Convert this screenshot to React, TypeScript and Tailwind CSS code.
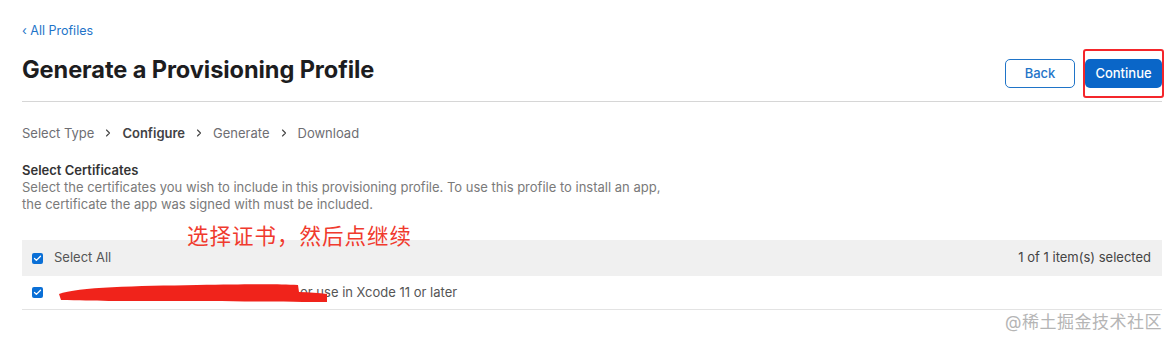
import { ChevronRight, Check } from "lucide-react";

const font = { fontFamily: 'Inter, "Noto Sans CJK SC", sans-serif' };

function Box() {
  return (
    <span className="w-[11px] h-[11px] rounded-[2px] bg-[#0a6fd6] flex items-center justify-center shrink-0">
      <Check size={9} strokeWidth={3.5} className="text-white" />
    </span>
  );
}

// red marker stroke hiding the certificate name
function Scribble() {
  return (
    <svg className="absolute left-[35px] top-[6px]" width="272" height="22" viewBox="0 0 272 22">
      <path
        d="M2 12 C 20 5, 80 4, 140 3 S 220 2, 241 3 L 242 10 C 252 10, 262 11, 270 12 L 270 20 C 230 20, 160 19, 110 19 S 40 19, 4 18 Z"
        fill="#f0231b"
      />
    </svg>
  );
}

export default function App() {
  const steps = ["Select Type", "Configure", "Generate", "Download"];
  return (
    <div className="w-[1176px] h-[344px] bg-white relative overflow-hidden" style={font}>
      <div className="pl-[22px] pr-[14px] pt-[23px]">
        <div className="text-[12.5px] text-[#1f74c8] leading-[16px]">‹ All Profiles</div>

        <div className="flex items-start justify-between h-[56px] mt-[7px] border-b border-[#d6d6d6] relative">
          <h1 className="mt-[10px] text-[23.6px] leading-[28px] font-bold text-[#1d1d1f] tracking-[-0.1px]">
            Generate a Provisioning Profile
          </h1>
          <div className="flex gap-[10px] mt-[13px]">
            <button className="w-[70px] h-[29px] rounded-[5px] border border-[#1f74c8] text-[13px] text-[#1f74c8] font-medium">
              Back
            </button>
            <button className="w-[77px] h-[29px] rounded-[5px] bg-[#0a66c8] text-[13px] text-white font-medium">
              Continue
            </button>
          </div>
          <div className="absolute right-[-2px] top-[3px] w-[81px] h-[49px] border-2 border-[#f4262b] rounded-[3px]" />
        </div>

        <div className="flex items-center mt-[22px] text-[13px] text-[#6e6e73] leading-[18px]">
          {steps.map((s, i) => (
            <div key={s} className="flex items-center">
              <span className={i === 1 ? "font-semibold text-[#424245]" : ""}>{s}</span>
              {i < steps.length - 1 && (
                <ChevronRight size={12} strokeWidth={2.2} className="mx-[8px] text-[#444]" />
              )}
            </div>
          ))}
        </div>

        <div className="mt-[19px] text-[13px] font-semibold text-[#333] leading-[18px]">
          Select Certificates
        </div>
        <div className="text-[13px] text-[#7a7a7a] leading-[17px]">
          Select the certificates you wish to include in this provisioning profile. To use this profile to install an app,
          <br />
          the certificate the app was signed with must be included.
        </div>

        <div className="mt-[27px] w-[1140px]">
          <div className="h-[36px] bg-[#f0f0f0] flex items-center justify-between px-[10px] text-[13px] text-[#555] relative">
            <div className="flex items-center gap-[11px]">
              <Box />
              <span>Select All</span>
            </div>
            <span className="pr-[1px] text-[#444]">1 of 1 item(s) selected</span>
            <div className="absolute left-[165px] top-[-18px] text-[21.5px] text-[#f03a2e] leading-[28px] tracking-[1px]">
              选择证书，然后点继续
            </div>
          </div>
          <div className="h-[34px] border-b border-[#e3e3e3] flex items-center px-[10px] text-[13px] text-[#555] relative">
            <div className="flex items-center gap-[11px]">
              <Box />
              <span className="inline-block w-[232px]" />
              <span className="ml-[3px]">or use in Xcode 11 or later</span>
            </div>
            <Scribble />
          </div>
        </div>
      </div>

      <div className="absolute right-[14px] top-[310px] text-[17px] text-[#b5b5b5] tracking-[0.5px]">
        @稀土掘金技术社区
      </div>
    </div>
  );
}
